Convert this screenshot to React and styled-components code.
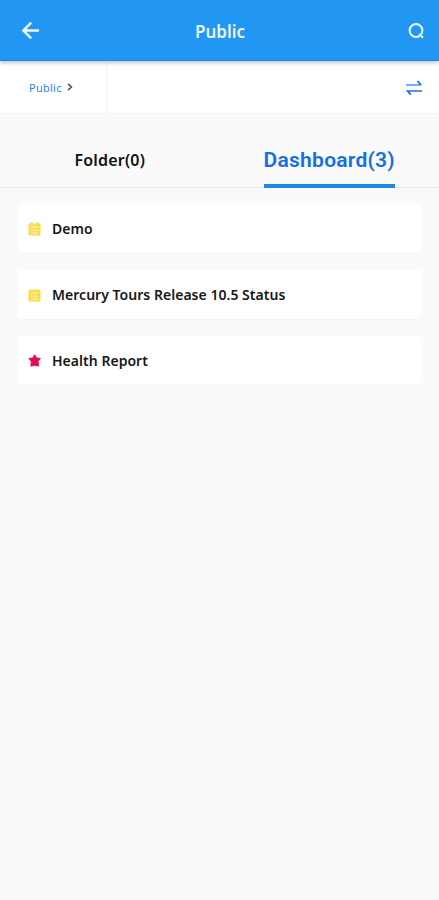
import React from "react";
import styled, { createGlobalStyle } from "styled-components";

const GlobalStyle = createGlobalStyle`
  * {
    box-sizing: border-box;
  }
  body {
    margin: 0;
    background: #fafafa;
  }
`;
const Screen = styled.div`
  display: flex;
  flex-direction: column;
  width: 100%;
  height: 900px;
  overflow: hidden;
  background: #fafafa;
  font-family: "Noto Sans", "Open Sans", sans-serif;
`;
const Header = styled.header`
  display: grid;
  grid-template-columns: 60px 1fr 60px;
  align-items: center;
  height: 61px;
  flex: none;
  z-index: 1;
  background: #2196f3;
  border-bottom: 1px solid #1589e4;
  box-shadow: 0 2px 4px rgba(0, 0, 0, 0.24);
`;
const IconButton = styled.button`
  display: flex;
  justify-content: ${({ $end }) => ($end ? "flex-end" : "flex-start")};
  padding: ${({ $end }) => ($end ? "1px 14px 0 0" : "0 0 0 20px")};
  border: 0;
  background: none;
  color: #e9f6ff;
`;
const Title = styled.h1`
  margin: 4px 0 0 1px;
  text-align: center;
  font-size: 17px;
  font-weight: 600;
  line-height: 24px;
  color: #e9f6ff;
`;
const Breadcrumb = styled.nav`
  display: flex;
  height: 53px;
  flex: none;
  background: #fff;
  border-bottom: 1px solid #f5f5f5;
`;
const Crumb = styled.div`
  display: flex;
  align-items: center;
  gap: 5px;
  width: 107px;
  padding-left: 29px;
  border-right: 1px solid #f5f5f5;
  color: #2488f5;
  font-size: 11px;
  letter-spacing: 0.25px;
`;
const SwapButton = styled(IconButton)`
  align-items: center;
  justify-content: flex-start;
  width: 47px;
  margin-left: auto;
  padding: 2px 0 0 12px;
  border-left: 1px solid #fcfcfc;
  color: #1f6fe0;
`;
const Tabs = styled.div`
  display: grid;
  grid-template-columns: 1fr 1fr;
  justify-items: center;
  height: 74px;
  flex: none;
  border-bottom: 1px solid #e9e9e9;
`;
const Tab = styled.div`
  display: flex;
  align-items: center;
  height: 74px;
  padding-top: 18px;
  font-size: 16px;
  font-weight: 600;
  letter-spacing: 0.2px;
  color: #111;
`;
const ActiveTab = styled(Tab)`
  border-bottom: 4px solid #1e88e5;
  padding-top: 22px;
  font-family: Roboto, sans-serif;
  font-size: 21px;
  font-weight: 600;
  letter-spacing: 0.25px;
  color: #116fe8;
`;
const List = styled.div`
  display: flex;
  flex-direction: column;
  gap: 17px;
  padding: 16px 18px;
`;
const Card = styled.div`
  display: flex;
  align-items: center;
  gap: 11px;
  height: 49px;
  padding-left: 10px;
  border-radius: 2px;
  background: #fff;
  box-shadow: 0 1px 1px rgba(0, 0, 0, 0.02);
`;
const Name = styled.span`
  font-size: 14px;
  font-weight: 600;
  line-height: 20px;
  letter-spacing: 0.03px;
  color: #171717;
`;

const BackIcon = () => (
  <svg width="20" height="20" viewBox="0 0 20 20" fill="none" stroke="currentColor" strokeWidth="2.5">
    <path d="M19 10.5H3.5M11.2 2.6L3.3 10.5l7.9 7.9" />
  </svg>
);

const SearchIcon = () => (
  <svg width="18" height="18" viewBox="0 0 18 18" fill="none" stroke="currentColor" strokeWidth="2">
    <circle cx="9" cy="8.5" r="6.4" />
    <path d="M12.2 11.9l3.8 3.8" />
  </svg>
);

const ChevronIcon = () => (
  <svg width="6" height="8" viewBox="0 0 6 8" fill="none" stroke="#555" strokeWidth="1.6">
    <path d="M1 0.8L4.4 4 1 7.2" />
  </svg>
);

const SwapIcon = () => (
  <svg width="18" height="16" viewBox="0 0 18 16" fill="none" stroke="currentColor" strokeWidth="1.7">
    <path d="M1 5h14" stroke="#7eadf4" strokeWidth="2" />
    <path d="M12.4 1.2L16.2 5.1M17 11H2.6l3.2 3.6" />
  </svg>
);

const BoardIcon = ({ pins }) => (
  <svg width="13" height="14" viewBox="0 0 13 14">
    <rect x="0.5" y="1.5" width="12" height="12" rx="1.2" fill="#fbdc4e" />
    <path d="M3 5h7M3 8.2h7M3 11h7" stroke="#fff5c5" strokeWidth="1.1" />
    {pins && <path d="M3.5 0v3M9.5 0v3" stroke="#fbdc4e" strokeWidth="1.8" />}
  </svg>
);

const StarIcon = () => (
  <svg width="13" height="14" viewBox="0 0 13 14">
    <path
      d="M6.7 0.8l1.7 3.1 4 .6-2.3 2.9.4 4.7-3.8-.8-3.8.8.4-4.7L.9 4.5l4.1-.6z"
      fill="#e20d50"
      stroke="#e20d50"
      strokeLinejoin="round"
    />
  </svg>
);

const DashboardRow = ({ icon, name }) => {
  return (
    <Card>
      {icon}
      <Name>{name}</Name>
    </Card>
  );
};

const App = () => {
  return (
    <Screen>
      <GlobalStyle />
      <Header>
        <IconButton aria-label="Back">
          <BackIcon />
        </IconButton>
        <Title>Public</Title>
        <IconButton $end aria-label="Search">
          <SearchIcon />
        </IconButton>
      </Header>
      <Breadcrumb>
        <Crumb>
          Public
          <ChevronIcon />
        </Crumb>
        <SwapButton aria-label="Switch">
          <SwapIcon />
        </SwapButton>
      </Breadcrumb>
      <Tabs>
        <Tab>Folder(0)</Tab>
        <ActiveTab>Dashboard(3)</ActiveTab>
      </Tabs>
      <List>
        <DashboardRow icon={<BoardIcon pins />} name="Demo" />
        <DashboardRow icon={<BoardIcon />} name="Mercury Tours Release 10.5 Status" />
        <DashboardRow icon={<StarIcon />} name="Health Report" />
      </List>
    </Screen>
  );
};

export default App;
